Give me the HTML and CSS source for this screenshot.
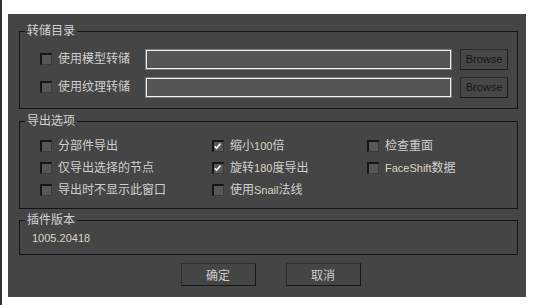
FILE: index.html
```html
<!DOCTYPE html>
<html lang="zh-CN">
    <head>
        <meta charset="UTF-8">
        <title>导出设置</title>
        <link rel="stylesheet" href="styles.css">
    </head>
    <body>
        <div class="frame">
            <div class="panel">
                <fieldset class="group">
                    <legend>转储目录</legend>
                    <div class="group-body dump">
                        <div class="dump-row">
                            <label class="check"><span class="box"></span><span>使用模型转储</span></label>
                            <input class="path" type="text">
                            <span class="browse">Browse</span>
                        </div>
                        <div class="dump-row">
                            <label class="check"><span class="box"></span><span>使用纹理转储</span></label>
                            <input class="path" type="text">
                            <span class="browse">Browse</span>
                        </div>
                    </div>
                </fieldset>

                <fieldset class="group group-export">
                    <legend>导出选项</legend>
                    <div class="group-body options">
                        <label class="check"><span class="box"></span><span>分部件导出</span></label>
                        <label class="check"><span class="box"><svg viewBox="0 0 12 12"><path d="M3 6.2 L5 8.4 L9.2 3.4" /></svg></span><span>缩小<span class="lat">100</span>倍</span></label>
                        <label class="check"><span class="box"></span><span>检查重面</span></label>
                        <label class="check"><span class="box"></span><span>仅导出选择的节点</span></label>
                        <label class="check"><span class="box"><svg viewBox="0 0 12 12"><path d="M3 6.2 L5 8.4 L9.2 3.4" /></svg></span><span>旋转<span class="lat">180</span>度导出</span></label>
                        <label class="check"><span class="box"></span><span><span class="lat">FaceShift</span>数据</span></label>
                        <label class="check"><span class="box"></span><span>导出时不显示此窗口</span></label>
                        <label class="check"><span class="box"></span><span>使用<span class="lat">Snail</span>法线</span></label>
                    </div>
                </fieldset>

                <fieldset class="group group-version">
                    <legend>插件版本</legend>
                    <div class="group-body version">1005.20418</div>
                </fieldset>

                <div class="actions">
                    <button class="action">确定</button>
                    <button class="action">取消</button>
                </div>
            </div>
        </div>
    </body>
</html>
```

FILE: styles.css
```css
html, body {
    margin: 0;
    background: #fff;
}
body {
    font-family: "Liberation Sans", "Noto Sans CJK SC", sans-serif;
    font-size: 12px;
    color: #cfcfcf;
}
.frame {
    height: 305px;
    box-sizing: border-box;
    border-left: 2px solid #333;
    padding: 14px 7px 8px 6px;
}
.panel {
    height: 283px;
    box-sizing: border-box;
    background: #454545;
    padding: 10px 8px 0 11px;
    display: flex;
    flex-direction: column;
}
.group {
    margin: 0;
    padding: 0;
    border: 1px solid #141414;
    min-width: 0;
}
.group legend {
    margin-left: 5px;
    padding: 0 2px;
    height: 14px;
    line-height: 14px;
    color: #d2d2d2;
}
.dump {
    padding: 10px 8px 10px 20px;
    display: flex;
    flex-direction: column;
    gap: 6px;
}
.dump-row {
    display: flex;
    align-items: center;
    height: 22px;
}
.dump-row .check {
    width: 106px;
}
.check {
    display: flex;
    align-items: center;
    gap: 6px;
    line-height: 14px;
    white-space: nowrap;
}
.box {
    width: 12px;
    height: 12px;
    box-sizing: border-box;
    background: #575757;
    border-top: 2px solid #161616;
    border-left: 2px solid #161616;
    border-right: 1px solid #3a3a3a;
    border-bottom: 1px solid #3a3a3a;
    flex: none;
    display: flex;
}
.box svg {
    width: 12px;
    height: 12px;
    margin: -2px 0 0 -2px;
}
.box svg path {
    fill: none;
    stroke: #f2f2f2;
    stroke-width: 1.8;
}
.lat {
    font-size: 11px;
    color: #dcd6c0;
}
.path {
    width: 305px;
    height: 19px;
    box-sizing: border-box;
    margin: 0;
    padding: 0;
    background: #555;
    border: 1px solid #f0f0f0;
    outline: 1px solid #7a7a7a;
    outline-offset: 0;
}
.browse {
    margin-left: 9px;
    width: 48px;
    height: 21px;
    box-sizing: border-box;
    display: flex;
    align-items: center;
    justify-content: center;
    background: #474747;
    border: 1px solid #2a2a2a;
    border-right-color: #1c1c1c;
    border-bottom-color: #1c1c1c;
    font-family: "Liberation Sans", sans-serif;
    font-size: 11px;
    color: #151515;
}
.group-export {
    margin-top: 5px;
}
.options {
    padding: 7px 8px 7px 20px;
    display: grid;
    grid-template-columns: 172px 155px 1fr;
    grid-auto-rows: 22px;
    align-items: center;
}
.group-version {
    margin-top: 4px;
}
.version {
    padding: 4px 8px 9px 12px;
    font-size: 11px;
    line-height: 14px;
    color: #dcd6c0;
}
.actions {
    display: flex;
    justify-content: center;
    gap: 30px;
    margin-top: 8px;
    padding-left: 4px;
}
.action {
    width: 75px;
    height: 23px;
    padding: 0;
    background: #454545;
    border: 1px solid #303030;
    border-right-color: #161616;
    border-bottom-color: #161616;
    font-family: "Noto Sans CJK SC", sans-serif;
    font-size: 12px;
    color: #cfcfcf;
}
```
